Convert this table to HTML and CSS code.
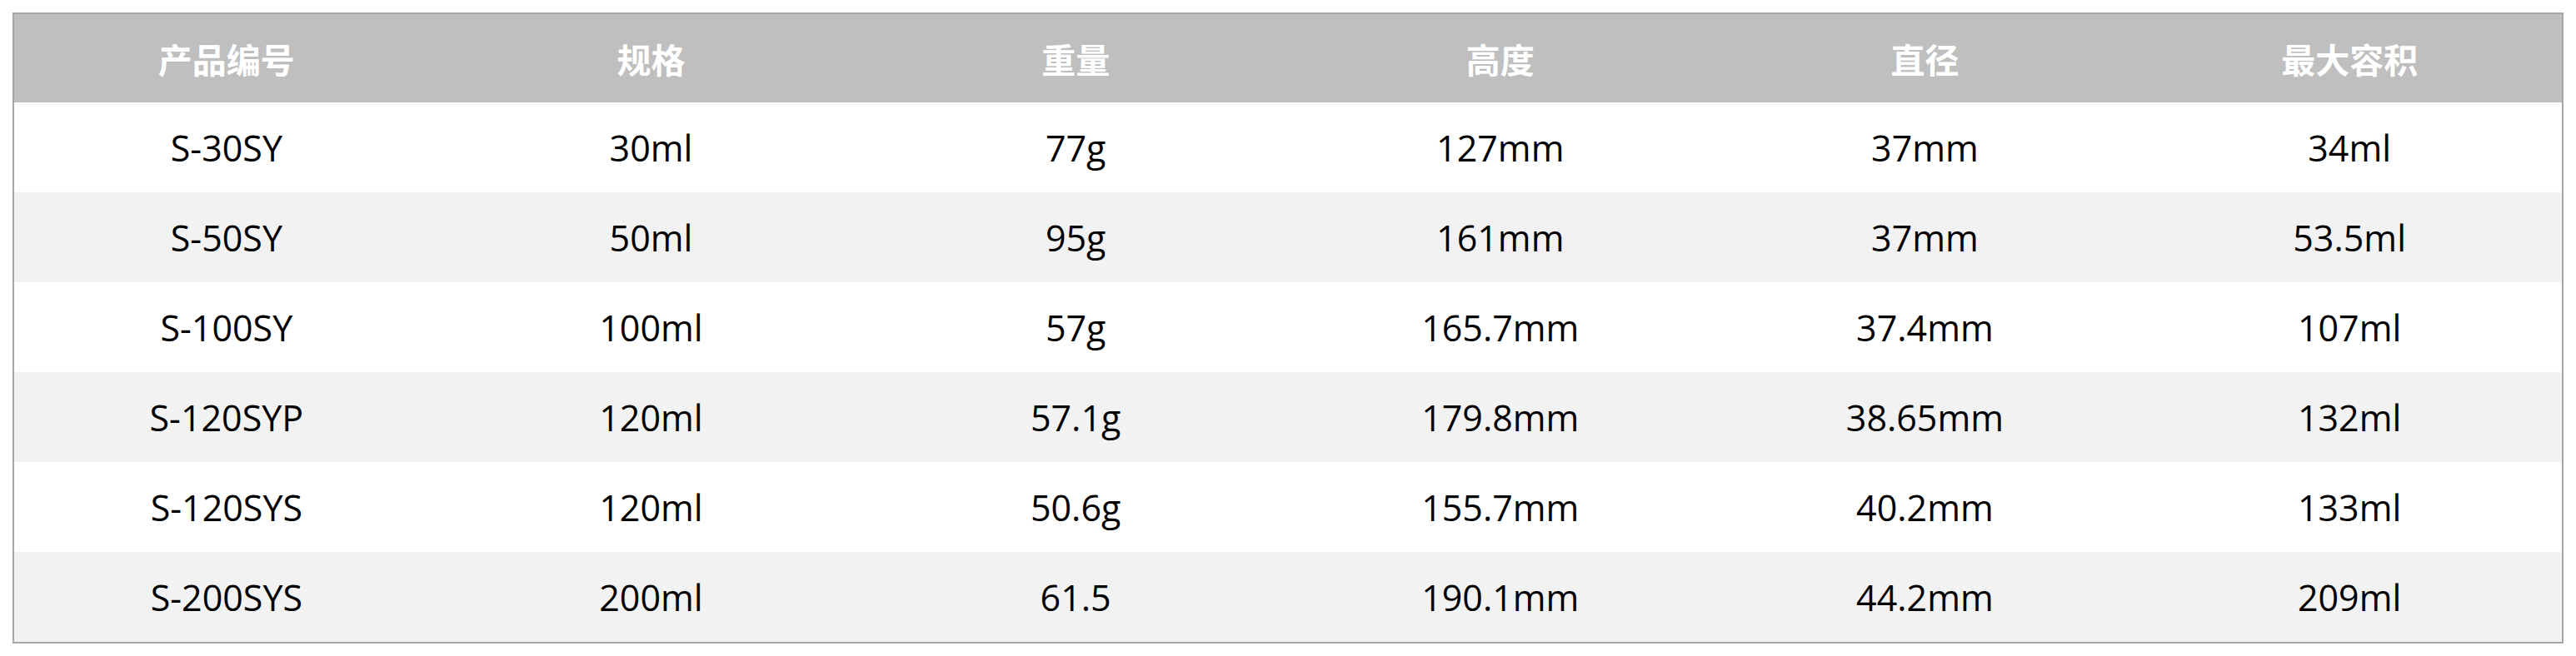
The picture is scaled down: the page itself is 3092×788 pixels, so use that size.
FILE: index.html
```html
<!DOCTYPE html>
<html lang="zh-CN">
<head>
<meta charset="utf-8">
<title>产品规格</title>
<link rel="stylesheet" href="styles.css">
</head>
<body>
<div class="frame">
<table class="spec">
<thead>
<tr><th>产品编号</th><th>规格</th><th>重量</th><th>高度</th><th>直径</th><th>最大容积</th></tr>
</thead>
<tbody>
<tr><td>S-30SY</td><td>30ml</td><td>77g</td><td>127mm</td><td>37mm</td><td>34ml</td></tr>
<tr><td>S-50SY</td><td>50ml</td><td>95g</td><td>161mm</td><td>37mm</td><td>53.5ml</td></tr>
<tr><td>S-100SY</td><td>100ml</td><td>57g</td><td>165.7mm</td><td>37.4mm</td><td>107ml</td></tr>
<tr><td>S-120SYP</td><td>120ml</td><td>57.1g</td><td>179.8mm</td><td>38.65mm</td><td>132ml</td></tr>
<tr><td>S-120SYS</td><td>120ml</td><td>50.6g</td><td>155.7mm</td><td>40.2mm</td><td>133ml</td></tr>
<tr><td>S-200SYS</td><td>200ml</td><td>61.5</td><td>190.1mm</td><td>44.2mm</td><td>209ml</td></tr>
</tbody>
</table>
</div>
</body>
</html>
```
FILE: styles.css
```css
html, body {
  margin: 0;
  padding: 0;
  background: #ffffff;
}
body {
  padding: 15px;
}
.frame {
  width: 3058px;
  border: 2px solid #a6a6a6;
}
.spec {
  width: 100%;
  border-collapse: collapse;
  table-layout: fixed;
}
.spec th {
  height: 106px;
  padding: 0;
  background: #bfbfbf;
  color: #ffffff;
  font-family: "Noto Sans CJK SC", "Noto Sans", sans-serif;
  font-weight: 700;
  font-size: 41px;
  text-align: center;
  vertical-align: middle;
}
.spec td {
  height: 108px;
  padding: 0;
  color: #000000;
  font-family: "Open Sans", "Noto Sans", sans-serif;
  font-size: 43px;
  text-align: center;
  vertical-align: middle;
}
.spec tbody tr:nth-child(even) td {
  background: #f2f2f2;
}
```
